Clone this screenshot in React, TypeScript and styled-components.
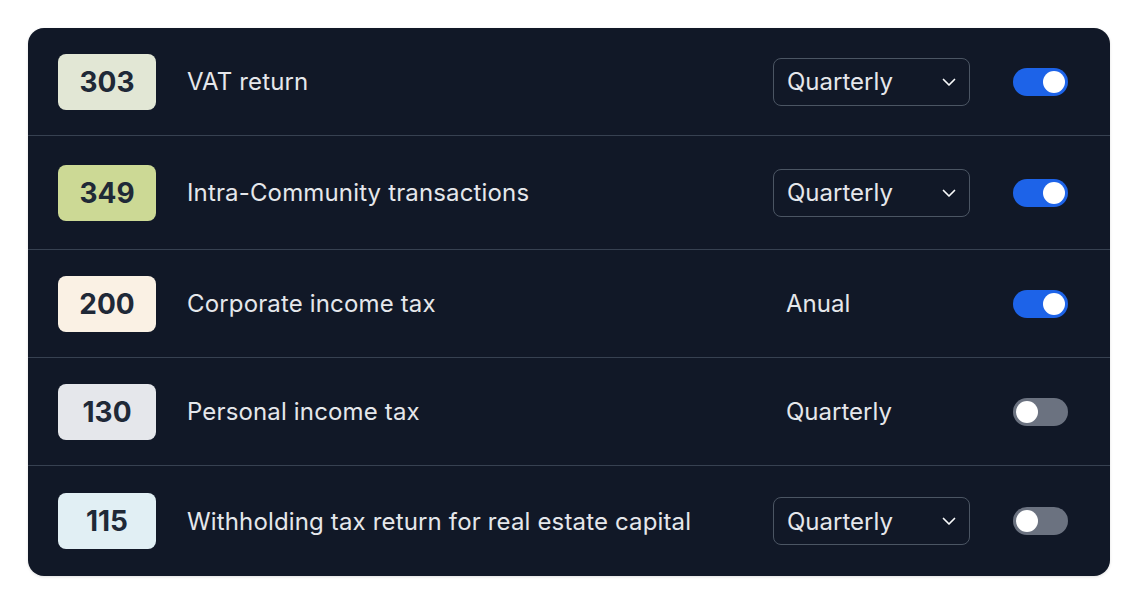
import React, { useState } from "react";
import styled, { createGlobalStyle } from "styled-components";

const GlobalStyle = createGlobalStyle`
  html, body {
    margin: 0;
    padding: 0;
    background: #ffffff;
    font-family: Inter, "Noto Sans", sans-serif;
  }
`;

const Page = styled.div`
  padding: 28px;
  width: 1138px;
  box-sizing: border-box;
`;

const Card = styled.div`
  background: #111827;
  border-radius: 16px;
  box-shadow: 0 1px 3px rgba(0, 0, 0, 0.12);
  overflow: hidden;
`;

const Row = styled.div<{ $height: number; $last?: boolean }>`
  display: flex;
  align-items: center;
  height: ${(p) => p.$height}px;
  box-sizing: border-box;
  padding: 0 42px 0 30px;
  border-bottom: ${(p) => (p.$last ? "none" : "1px solid #374151")};
`;

const Badge = styled.div<{ $bg: string }>`
  width: 98px;
  height: 56px;
  border-radius: 8px;
  background: ${(p) => p.$bg};
  color: #1f2937;
  font-size: 28px;
  font-weight: 700;
  display: flex;
  align-items: center;
  justify-content: center;
  flex-shrink: 0;
`;

const Label = styled.div`
  margin-left: 31px;
  flex: 1;
  color: #e5e7eb;
  font-size: 24px;
  font-weight: 400;
  letter-spacing: 0.15px;
`;

const Frequency = styled.div`
  width: 197px;
  height: 48px;
  box-sizing: border-box;
  display: flex;
  align-items: center;
  justify-content: space-between;
  padding: 0 10px 0 13px;
  color: #e5e7eb;
  font-size: 24px;
`;

const Select = styled(Frequency)`
  border: 1px solid #4b5563;
  border-radius: 8px;
  cursor: pointer;
`;

const Toggle = styled.button<{ $on: boolean }>`
  margin-left: 43px;
  width: 55px;
  height: 28px;
  border-radius: 14px;
  border: none;
  padding: 3px;
  background: ${(p) => (p.$on ? "#1d63e8" : "#6b7280")};
  display: flex;
  justify-content: ${(p) => (p.$on ? "flex-end" : "flex-start")};
  cursor: pointer;
  box-sizing: border-box;

  &::after {
    content: "";
    width: 22px;
    height: 22px;
    border-radius: 50%;
    background: #ffffff;
  }
`;

const Chevron = () => (
  <svg width="20" height="20" viewBox="0 0 20 20" fill="none" stroke="#f9fafb" strokeWidth="1.7" strokeLinecap="round" strokeLinejoin="round">
    <path d="M4.5 7.5l5.5 5.5 5.5-5.5" />
  </svg>
);

type Model = {
  code: string;
  name: string;
  bg: string;
  frequency: string;
  editable: boolean;
  enabled: boolean;
  height: number;
};

const models: Model[] = [
  { code: "303", name: "VAT return", bg: "#e2e7d5", frequency: "Quarterly", editable: true, enabled: true, height: 108 },
  { code: "349", name: "Intra-Community transactions", bg: "#ccd995", frequency: "Quarterly", editable: true, enabled: true, height: 114 },
  { code: "200", name: "Corporate income tax", bg: "#faf1e4", frequency: "Anual", editable: false, enabled: true, height: 108 },
  { code: "130", name: "Personal income tax", bg: "#e5e7eb", frequency: "Quarterly", editable: false, enabled: false, height: 108 },
  { code: "115", name: "Withholding tax return for real estate capital", bg: "#e1eff4", frequency: "Quarterly", editable: true, enabled: false, height: 110 },
];

export default function App() {
  const [state, setState] = useState(models.map((m) => m.enabled));

  const flip = (i: number) => {
    const next = [...state];
    next[i] = !next[i];
    setState(next);
  };

  return (
    <Page>
      <GlobalStyle />
      <Card>
        {models.map((m, i) => (
          <Row key={m.code} $height={m.height} $last={i === models.length - 1}>
            <Badge $bg={m.bg}>{m.code}</Badge>
            <Label>{m.name}</Label>
            {m.editable ? (
              <Select>
                <span>{m.frequency}</span>
                <Chevron />
              </Select>
            ) : (
              <Frequency>
                <span>{m.frequency}</span>
              </Frequency>
            )}
            <Toggle $on={state[i]} onClick={() => flip(i)} />
          </Row>
        ))}
      </Card>
    </Page>
  );
}
